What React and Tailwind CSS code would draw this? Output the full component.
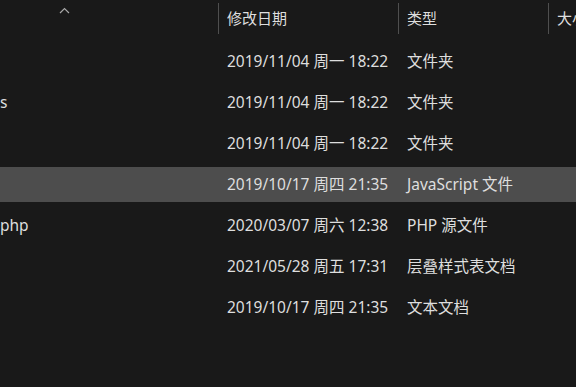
import React from 'react'

const ROWS = [
  { name: '', date: '2019/11/04 周一 18:22', type: '文件夹' },
  { name: 's', date: '2019/11/04 周一 18:22', type: '文件夹' },
  { name: '', date: '2019/11/04 周一 18:22', type: '文件夹' },
  { name: '', date: '2019/10/17 周四 21:35', type: 'JavaScript 文件', selected: true },
  { name: 'php', date: '2020/03/07 周六 12:38', type: 'PHP 源文件' },
  { name: '', date: '2021/05/28 周五 17:31', type: '层叠样式表文档' },
  { name: '', date: '2019/10/17 周四 21:35', type: '文本文档' },
]

const FONT = "font-['Segoe_UI','Noto_Sans','Noto_Sans_CJK_SC',sans-serif]"

export default function App() {
  return (
    <div className={`w-[576px] h-[387px] overflow-hidden bg-[#191919] text-[#dedede] text-[15.5px] ${FONT}`}>
      {/* ── Column header ── */}
      <div className="relative flex h-[38px] pt-[3px] whitespace-nowrap text-[15px]">
        <div className="w-[218px] shrink-0 relative">
          <svg className="absolute left-[59px] top-[4px]" width="11" height="7" viewBox="0 0 11 7">
            <polyline points="1,6 5.5,1.5 10,6" fill="none" stroke="#a8a8a8" strokeWidth="1.2" />
          </svg>
        </div>
        <HeaderCell w="w-[180px]" label="修改日期" />
        <HeaderCell w="w-[150px]" label="类型" />
        <HeaderCell w="w-[120px]" label="大小" />
      </div>

      {/* ── Rows ── */}
      <div className="flex flex-col gap-[6px] pt-[6px]">
        {ROWS.map((r, i) => (
          <div key={i} className={`flex h-[35px] items-center whitespace-nowrap ${r.selected ? 'bg-[#4d4d4d]' : ''}`}>
            <div className="w-[218px] shrink-0 overflow-hidden">{r.name}</div>
            <div className="w-[180px] shrink-0 pl-[9px]">{r.date}</div>
            <div className="w-[150px] shrink-0 pl-[9px]">{r.type}</div>
          </div>
        ))}
      </div>
    </div>
  )
}

function HeaderCell({ w, label }) {
  return (
    <div className={`${w} shrink-0 flex items-center h-[31px] border-l border-[#4f4f4f] pl-[8px]`}>
      {label}
    </div>
  )
}
